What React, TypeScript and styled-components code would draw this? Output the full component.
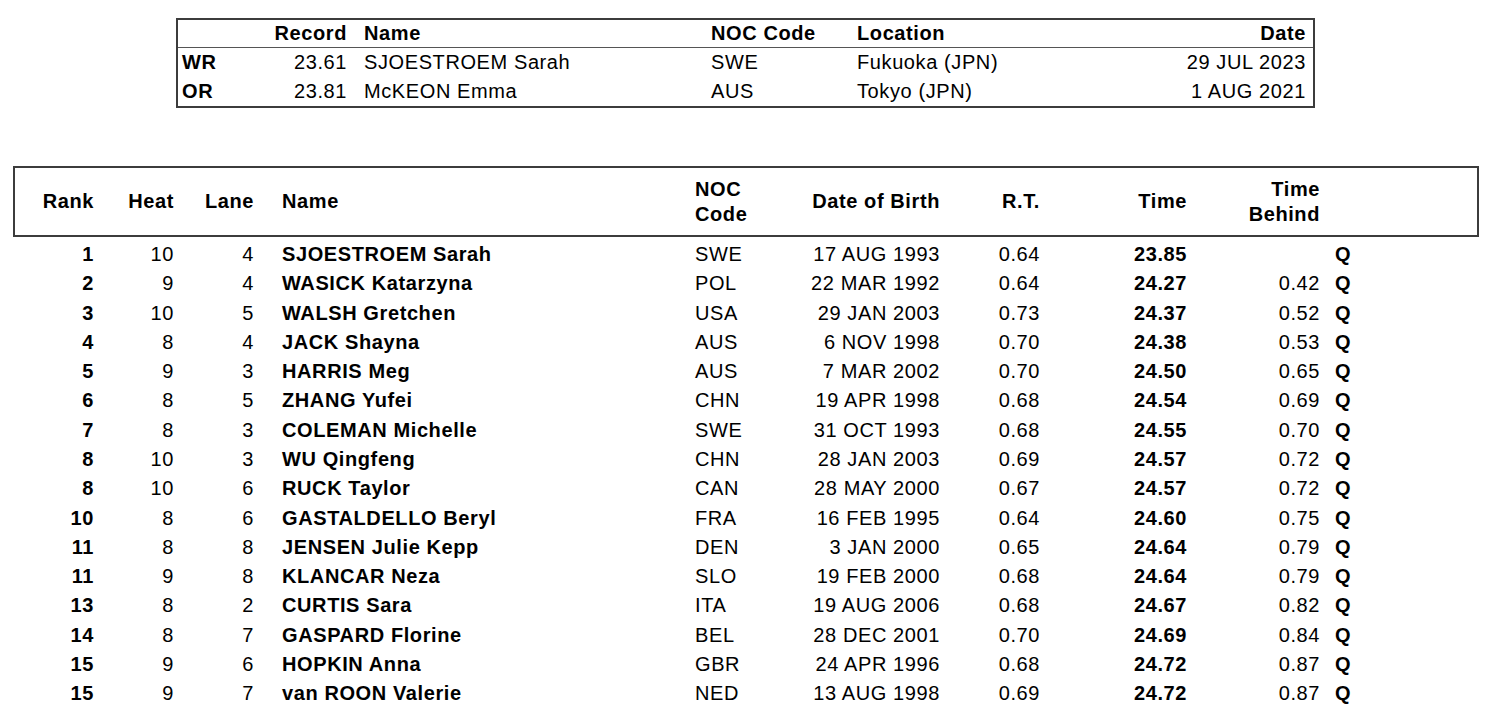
import React from "react";
import styled, { createGlobalStyle } from "styled-components";

const GlobalStyle = createGlobalStyle`
  html, body {
    margin: 0;
    padding: 0;
    background: #ffffff;
  }
  body {
    font-family: "Liberation Sans", Arial, sans-serif;
    color: #000;
  }
`;

const Page = styled.div`
  display: flex;
  flex-direction: column;
  padding-top: 18px;
  font-size: 20px;
  letter-spacing: 0.6px;
`;

const RecordsBox = styled.div`
  margin-left: 176px;
  width: 1139px;
  border: 2px solid #3c3c3c;
  box-sizing: border-box;
`;

const RecordsRow = styled.div<{ $head?: boolean }>`
  display: grid;
  grid-template-columns: 86px 83px 364px 146px 243px 1fr;
  align-items: center;
  height: ${(p) => (p.$head ? "27px" : "29px")};
  padding-right: 7px;
  font-weight: ${(p) => (p.$head ? 700 : 400)};
  border-bottom: ${(p) => (p.$head ? "1px solid #555" : "none")};
`;

const Cell = styled.div<{ $align?: "left" | "right"; $pad?: number; $bold?: boolean }>`
  text-align: ${(p) => p.$align || "left"};
  padding-left: ${(p) => p.$pad || 0}px;
  font-weight: ${(p) => (p.$bold ? 700 : "inherit")};
  white-space: nowrap;
`;

const ResultsBox = styled.div`
  margin-top: 58px;
  margin-left: 13px;
  width: 1466px;
  border: 2px solid #3c3c3c;
  box-sizing: border-box;
`;

const cols = "79px 80px 80px 441px 105px 140px 100px 147px 133px 1fr";

const HeadRow = styled.div`
  display: grid;
  grid-template-columns: ${cols};
  align-items: center;
  height: 67px;
  font-weight: 700;
  line-height: 25px;
`;

const Body = styled.div`
  margin-left: 15px;
  padding-top: 3px;
`;

const DataRow = styled.div`
  display: grid;
  grid-template-columns: ${cols};
  align-items: center;
  height: 29.27px;
`;

type Rec = [string, string, string, string, string, string];
const records: Rec[] = [
  ["WR", "23.61", "SJOESTROEM Sarah", "SWE", "Fukuoka (JPN)", "29 JUL 2023"],
  ["OR", "23.81", "McKEON Emma", "AUS", "Tokyo (JPN)", "1 AUG 2021"],
];

type Res = [string, string, string, string, string, string, string, string, string];
const results: Res[] = [
  ["1", "10", "4", "SJOESTROEM Sarah", "SWE", "17 AUG 1993", "0.64", "23.85", ""],
  ["2", "9", "4", "WASICK Katarzyna", "POL", "22 MAR 1992", "0.64", "24.27", "0.42"],
  ["3", "10", "5", "WALSH Gretchen", "USA", "29 JAN 2003", "0.73", "24.37", "0.52"],
  ["4", "8", "4", "JACK Shayna", "AUS", "6 NOV 1998", "0.70", "24.38", "0.53"],
  ["5", "9", "3", "HARRIS Meg", "AUS", "7 MAR 2002", "0.70", "24.50", "0.65"],
  ["6", "8", "5", "ZHANG Yufei", "CHN", "19 APR 1998", "0.68", "24.54", "0.69"],
  ["7", "8", "3", "COLEMAN Michelle", "SWE", "31 OCT 1993", "0.68", "24.55", "0.70"],
  ["8", "10", "3", "WU Qingfeng", "CHN", "28 JAN 2003", "0.69", "24.57", "0.72"],
  ["8", "10", "6", "RUCK Taylor", "CAN", "28 MAY 2000", "0.67", "24.57", "0.72"],
  ["10", "8", "6", "GASTALDELLO Beryl", "FRA", "16 FEB 1995", "0.64", "24.60", "0.75"],
  ["11", "8", "8", "JENSEN Julie Kepp", "DEN", "3 JAN 2000", "0.65", "24.64", "0.79"],
  ["11", "9", "8", "KLANCAR Neza", "SLO", "19 FEB 2000", "0.68", "24.64", "0.79"],
  ["13", "8", "2", "CURTIS Sara", "ITA", "19 AUG 2006", "0.68", "24.67", "0.82"],
  ["14", "8", "7", "GASPARD Florine", "BEL", "28 DEC 2001", "0.70", "24.69", "0.84"],
  ["15", "9", "6", "HOPKIN Anna", "GBR", "24 APR 1996", "0.68", "24.72", "0.87"],
  ["15", "9", "7", "van ROON Valerie", "NED", "13 AUG 1998", "0.69", "24.72", "0.87"],
];

function Records() {
  return (
    <RecordsBox>
      <RecordsRow $head>
        <Cell />
        <Cell $align="right">Record</Cell>
        <Cell $pad={17}>Name</Cell>
        <Cell>NOC Code</Cell>
        <Cell>Location</Cell>
        <Cell $align="right">Date</Cell>
      </RecordsRow>
      {records.map((r) => (
        <RecordsRow key={r[0]}>
          <Cell $pad={4} $bold>
            {r[0]}
          </Cell>
          <Cell $align="right">{r[1]}</Cell>
          <Cell $pad={17}>{r[2]}</Cell>
          <Cell>{r[3]}</Cell>
          <Cell>{r[4]}</Cell>
          <Cell $align="right">{r[5]}</Cell>
        </RecordsRow>
      ))}
    </RecordsBox>
  );
}

export default function App() {
  return (
    <>
      <GlobalStyle />
      <Page>
        <Records />
        <ResultsBox>
          <HeadRow>
            <Cell $align="right">Rank</Cell>
            <Cell $align="right">Heat</Cell>
            <Cell $align="right">Lane</Cell>
            <Cell $pad={28}>Name</Cell>
            <Cell>
              NOC
              <br />
              Code
            </Cell>
            <Cell $align="right">Date of Birth</Cell>
            <Cell $align="right">R.T.</Cell>
            <Cell $align="right">Time</Cell>
            <Cell $align="right">
              Time
              <br />
              Behind
            </Cell>
            <Cell />
          </HeadRow>
        </ResultsBox>
        <Body>
          {results.map((r, i) => (
            <DataRow key={i}>
              <Cell $align="right" $bold>
                {r[0]}
              </Cell>
              <Cell $align="right">{r[1]}</Cell>
              <Cell $align="right">{r[2]}</Cell>
              <Cell $pad={28} $bold>
                {r[3]}
              </Cell>
              <Cell>{r[4]}</Cell>
              <Cell $align="right">{r[5]}</Cell>
              <Cell $align="right">{r[6]}</Cell>
              <Cell $align="right" $bold>
                {r[7]}
              </Cell>
              <Cell $align="right">{r[8]}</Cell>
              <Cell $pad={15} $bold>
                Q
              </Cell>
            </DataRow>
          ))}
        </Body>
      </Page>
    </>
  );
}
